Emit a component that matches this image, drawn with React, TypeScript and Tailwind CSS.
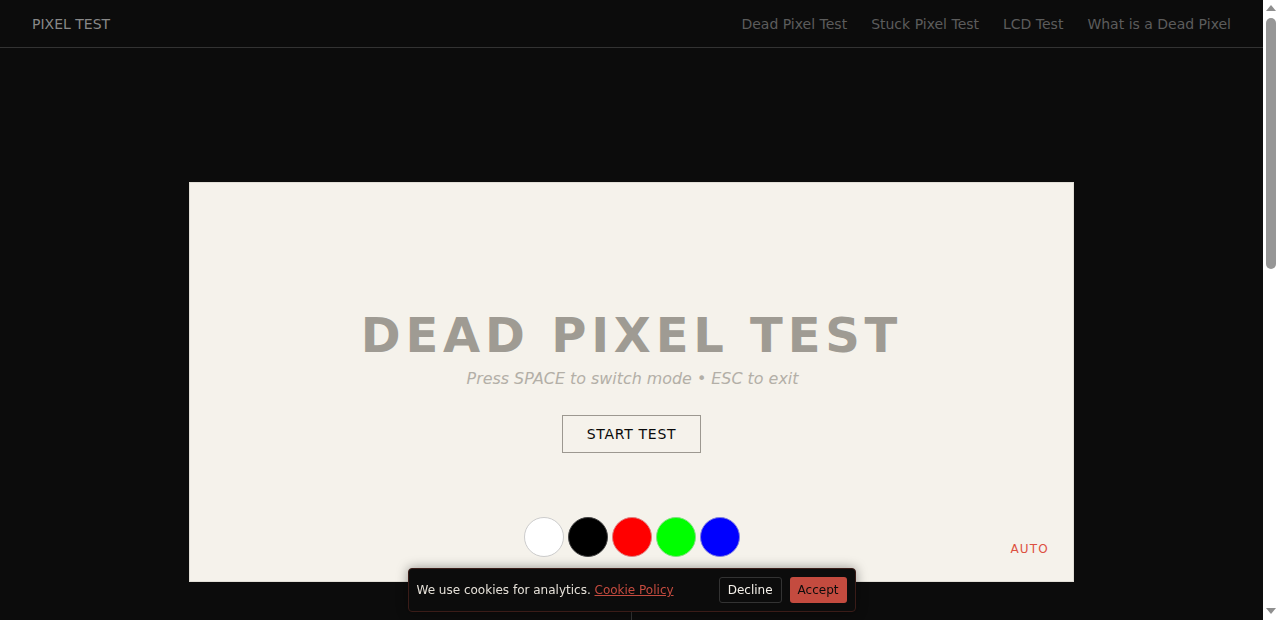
const FONT = 'font-["DejaVu_Sans","Liberation_Sans",sans-serif]'

const swatches = [
  { name: 'white', className: 'bg-white border-[#cccccc]' },
  { name: 'black', className: 'bg-black border-[#444444]' },
  { name: 'red', className: 'bg-[#ff0000] border-[#e08080]' },
  { name: 'green', className: 'bg-[#00ff00] border-[#80e080]' },
  { name: 'blue', className: 'bg-[#0000ff] border-[#8080e0]' },
]

const links = ['Dead Pixel Test', 'Stuck Pixel Test', 'LCD Test', 'What is a Dead Pixel']

function Scrollbar() {
  return (
    <aside className="flex h-full w-[15px] shrink-0 flex-col items-center bg-white">
      <svg width="10" height="6" viewBox="0 0 10 6" className="mt-[5px] shrink-0 fill-[#8f8f8f]">
        <path d="M5 0 L10 6 L0 6 Z" />
      </svg>
      <div className="mt-[6.5px] h-[251px] w-[10px] shrink-0 rounded-[5px] bg-[#969696]" />
      <svg width="10" height="6" viewBox="0 0 10 6" className="mt-auto mb-[6px] shrink-0 fill-[#8f8f8f]">
        <path d="M0 0 L10 0 L5 6 Z" />
      </svg>
    </aside>
  )
}

function App() {
  return (
    <div className={`${FONT} flex h-screen overflow-hidden bg-[#0c0c0c]`}>
      <div className="min-w-0 flex-1">
        {/* header */}
        <header className="flex h-12 items-center justify-between border-b border-[#333333] px-8 pt-px">
          <span className="text-[14px] text-[#888888]">PIXEL TEST</span>
          <nav className="flex gap-6">
            {links.map((link) => (
              <a key={link} className="text-[14px] text-[#5c5c5c]">
                {link}
              </a>
            ))}
          </nav>
        </header>

        {/* test panel */}
        <main className="flex flex-col items-center pt-[134px]">
          <section className="relative flex h-[400px] w-[885px] flex-col items-center border border-[#e2dfd7] bg-[#f5f2eb]">
            <h1 className="mt-[120px] text-[48px] leading-[64px] font-bold tracking-[0.1em] text-[#9f9b93]">
              DEAD PIXEL TEST
            </h1>
            <p className="pl-[2px] text-[15.9px] leading-[24px] text-[#b3afa7] italic">
              Press SPACE to switch mode • ESC to exit
            </p>
            <button className="mt-[24px] h-[38px] w-[139px] border border-[#9c9890] text-[14px] tracking-[0.7px] text-[#0a0a0a]">
              START TEST
            </button>
            <div className="mt-[64px] flex gap-1">
              {swatches.map((s) => (
                <button key={s.name} aria-label={s.name} className={`h-10 w-10 rounded-full border ${s.className}`} />
              ))}
            </div>
            <span className="absolute right-[24px] bottom-[23px] text-[12px] tracking-[1.2px] text-[#dd5040]">AUTO</span>
          </section>
          <div className="mt-[30px] h-[100px] w-px bg-[#333333]" />
        </main>
      </div>

      <Scrollbar />

      {/* cookie notice */}
      <div className="fixed bottom-2 left-[407.5px] flex h-11 w-[448px] items-center justify-between rounded border border-[#3a1c18] bg-[#0c0c0c] px-2 shadow-[0_0_12px_rgba(0,0,0,0.4)]">
        <p className="text-[12px] text-[#e5e0d8]">
          We use cookies for analytics. <a className="text-[#c44b3f] underline">Cookie Policy</a>
        </p>
        <div className="flex gap-2">
          <button className="h-[26px] rounded-[3px] border border-[#333333] px-2 text-[12px] text-[#f5f1ea]">Decline</button>
          <button className="h-[26px] rounded-[3px] bg-[#c44b3f] px-2 text-[12px] text-[#0c0c0c]">Accept</button>
        </div>
      </div>
    </div>
  )
}

export default App
